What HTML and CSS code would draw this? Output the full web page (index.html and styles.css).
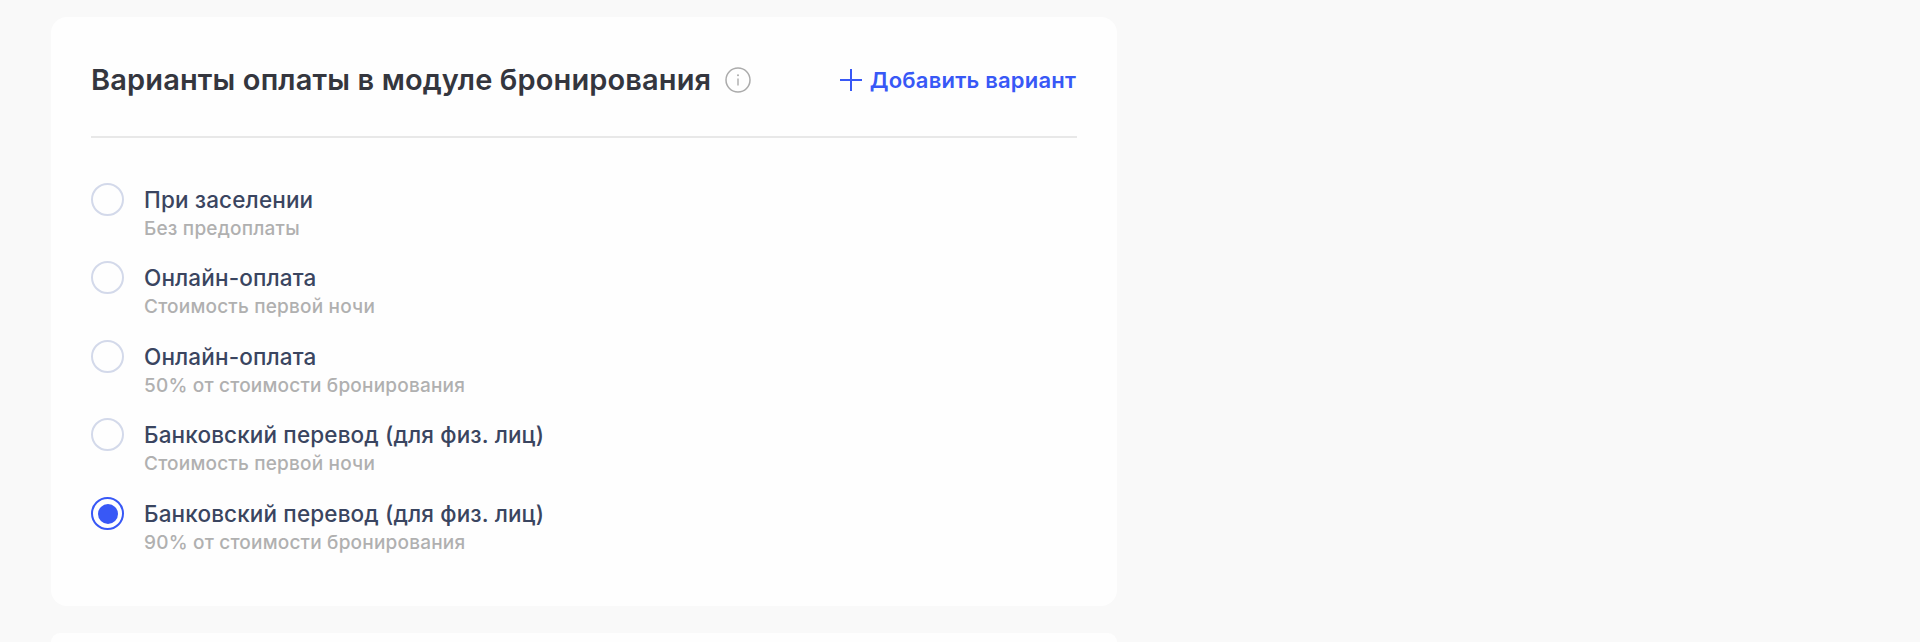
FILE: index.html
```html
<!DOCTYPE html>
<html lang="ru">
<head>
    <meta charset="UTF-8">
    <meta name="viewport" content="width=device-width, initial-scale=1.0">
    <title>Варианты оплаты</title>
    <link rel="stylesheet" href="styles.css">
</head>
<body>
    <div class="content">
        <section class="card">
            <div class="card-header">
                <div class="card-title">
                    <h2>Варианты оплаты в модуле бронирования</h2>
                    <svg class="info-icon" width="26" height="26" viewBox="0 0 26 26" fill="none">
                        <circle cx="13" cy="13" r="12" stroke="#ababab" stroke-width="1.5"/>
                        <path d="M13 11.5v7" stroke="#ababab" stroke-width="1.4"/>
                        <circle cx="13" cy="8.3" r="1" fill="#ababab"/>
                    </svg>
                </div>
                <a class="add-link" href="#">
                    <svg width="24" height="24" viewBox="0 0 24 24" fill="none">
                        <path d="M12 1v22M1 12h22" stroke="#3858f6" stroke-width="2"/>
                    </svg>
                    Добавить вариант
                </a>
            </div>

            <div class="options">
                <div class="option">
                    <span class="radio"></span>
                    <div>
                        <div class="option-name">При заселении</div>
                        <div class="option-note">Без предоплаты</div>
                    </div>
                </div>
                <div class="option">
                    <span class="radio"></span>
                    <div>
                        <div class="option-name">Онлайн-оплата</div>
                        <div class="option-note">Стоимость первой ночи</div>
                    </div>
                </div>
                <div class="option">
                    <span class="radio"></span>
                    <div>
                        <div class="option-name">Онлайн-оплата</div>
                        <div class="option-note">50% от стоимости бронирования</div>
                    </div>
                </div>
                <div class="option">
                    <span class="radio"></span>
                    <div>
                        <div class="option-name">Банковский перевод (для физ. лиц)</div>
                        <div class="option-note">Стоимость первой ночи</div>
                    </div>
                </div>
                <div class="option">
                    <span class="radio checked"></span>
                    <div>
                        <div class="option-name">Банковский перевод (для физ. лиц)</div>
                        <div class="option-note">90% от стоимости бронирования</div>
                    </div>
                </div>
            </div>
        </section>

        <section class="card-next"></section>
    </div>
</body>
</html>
```

FILE: styles.css
```css
* {
    margin: 0;
    padding: 0;
    box-sizing: border-box;
    font-family: Inter, 'Noto Sans', sans-serif;
}

html,
body {
    height: 100%;
    overflow: hidden;
}

body {
    background-color: #f9f9f9;
}

.content {
    width: 1066px;
    margin-left: 51px;
    padding-top: 17px;
    display: flex;
    flex-direction: column;
    gap: 27px;
}

.card {
    background-color: #fefefe;
    border-radius: 16px;
    padding: 40px;
    height: 589px;
}

.card-next {
    background-color: #fefefe;
    border-radius: 16px 16px 0 0;
    height: 9px;
}

.card-header {
    display: flex;
    justify-content: space-between;
    align-items: center;
    height: 81px;
    padding-bottom: 34px;
    padding-right: 1px;
    border-bottom: 2px solid #e8e8e8;
}

.card-title {
    display: flex;
    align-items: center;
    gap: 14px;
}

.card-title h2 {
    font-size: 29px;
    line-height: 36px;
    font-weight: 600;
    letter-spacing: 0.13px;
    color: #34363e;
}

.info-icon {
    flex-shrink: 0;
}

.add-link {
    display: flex;
    align-items: center;
    gap: 7px;
    font-size: 22px;
    font-weight: 600;
    letter-spacing: 0.2px;
    color: #3858f6;
    text-decoration: none;
}

.options {
    margin-top: 29px;
    display: flex;
    flex-direction: column;
}

.option {
    display: flex;
    gap: 20px;
    height: 78.4px;
}

.radio {
    width: 33px;
    height: 33px;
    margin-top: 16px;
    border: 2px solid #d3d9ea;
    border-radius: 50%;
    flex-shrink: 0;
}

.radio.checked {
    border-color: #3858f6;
    padding: 4.5px;
    background-color: #3858f6;
    background-clip: content-box;
}

.option-name {
    margin-top: 19px;
    font-size: 22.5px;
    line-height: 28px;
    font-weight: 500;
    letter-spacing: 0.14px;
    color: #3a4560;
}

.option-note {
    margin-top: 3px;
    font-size: 19px;
    line-height: 24px;
    font-weight: 500;
    letter-spacing: 0.2px;
    color: #b0b0b0;
}
```
